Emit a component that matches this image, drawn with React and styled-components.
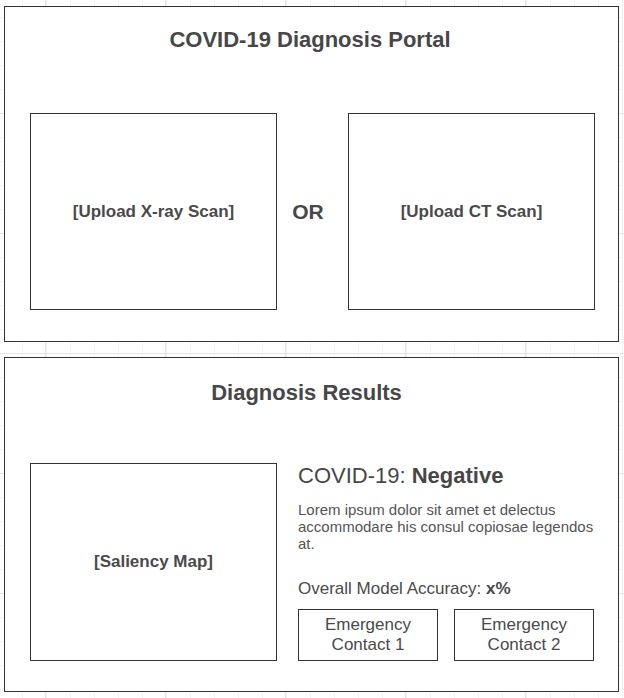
import React from "react";
import styled, { createGlobalStyle } from "styled-components";

const Global = createGlobalStyle`
  html, body { margin: 0; padding: 0; }
  body {
    min-height: 698px;
    background-color: #fff;
    background-image:
      linear-gradient(to right, #e4e4e4 1px, transparent 1px),
      linear-gradient(to bottom, #e4e4e4 1px, transparent 1px),
      linear-gradient(to right, #f1f1f1 1px, transparent 1px),
      linear-gradient(to bottom, #f1f1f1 1px, transparent 1px);
    background-size: 120px 120px, 120px 120px, 24px 24px, 24px 24px;
    background-position: 45px 0, 0 113px, 22px 0, 0 17px;
    font-family: "Liberation Sans", Arial, sans-serif;
    color: #474747;
  }
`;

const Page = styled.div`
  display: flex;
  flex-direction: column;
  gap: 15px;
  padding: 6px 0 0 4px;
`;

const Panel = styled.section`
  box-sizing: border-box;
  width: 615px;
  height: ${(p) => p.$h}px;
  border: 1px solid #333;
  background: #fff;
  padding: ${(p) => p.$top}px 23px 0 25px;
  display: flex;
  flex-direction: column;
`;

const Title = styled.h1`
  margin: 0 0 ${(p) => p.$gap}px;
  padding-right: ${(p) => p.$shift}px;
  font-size: 22px;
  line-height: 1.15;
  font-weight: 700;
  text-align: center;
  color: #474747;
`;

const UploadRow = styled.div`
  display: grid;
  grid-template-columns: 247px 1fr 247px;
  height: 197px;
`;

const Frame = styled.div`
  box-sizing: border-box;
  border: 1px solid #333;
  display: flex;
  align-items: center;
  justify-content: center;
  font-size: 17px;
  font-weight: 700;
  color: #4a4a4a;
`;

const Or = styled.div`
  display: flex;
  align-items: center;
  justify-content: center;
  padding-right: 9px;
  font-size: 21px;
  font-weight: 700;
  color: #474747;
`;

const ResultRow = styled.div`
  display: grid;
  grid-template-columns: 247px 1fr;
  column-gap: 21px;
  height: 197px;
  margin-right: -10px;
`;

const Details = styled.div`
  display: flex;
  flex-direction: column;
`;

const Verdict = styled.div`
  font-size: 22px;
  line-height: 1.15;
  color: #474747;
  b { font-weight: 700; }
`;

const Lorem = styled.p`
  margin: 12px 0 0;
  font-size: 15px;
  line-height: 1.15;
  color: #555;
`;

const Accuracy = styled.div`
  margin-top: 27px;
  font-size: 17px;
  line-height: 1.15;
  color: #4a4a4a;
  b { font-weight: 700; }
`;

const Buttons = styled.div`
  margin-top: 10px;
  display: grid;
  grid-template-columns: 140px 140px;
  column-gap: 16px;
`;

const Contact = styled.button`
  box-sizing: border-box;
  height: 52px;
  border: 1px solid #333;
  background: #fff;
  padding: 0;
  font-family: "Liberation Sans", Arial, sans-serif;
  font-size: 17px;
  line-height: 1.15;
  color: #4a4a4a;
  text-align: center;
`;

export default function App() {
  return (
    <>
      <Global />
      <Page>
        <Panel $h={336} $top={20}>
          <Title $gap={61} $shift={5}>COVID-19 Diagnosis Portal</Title>
          <UploadRow>
            <Frame>[Upload X-ray Scan]</Frame>
            <Or>OR</Or>
            <Frame>[Upload CT Scan]</Frame>
          </UploadRow>
        </Panel>
        <Panel $h={335} $top={22}>
          <Title $gap={58} $shift={12}>Diagnosis Results</Title>
          <ResultRow>
            <Frame>[Saliency Map]</Frame>
            <Details>
              <Verdict>
                COVID-19: <b>Negative</b>
              </Verdict>
              <Lorem>
                Lorem ipsum dolor sit amet et delectus accommodare his consul
                copiosae legendos at.
              </Lorem>
              <Accuracy>
                Overall Model Accuracy: <b>x%</b>
              </Accuracy>
              <Buttons>
                <Contact>
                  Emergency
                  <br />
                  Contact 1
                </Contact>
                <Contact>
                  Emergency
                  <br />
                  Contact 2
                </Contact>
              </Buttons>
            </Details>
          </ResultRow>
        </Panel>
      </Page>
    </>
  );
}
